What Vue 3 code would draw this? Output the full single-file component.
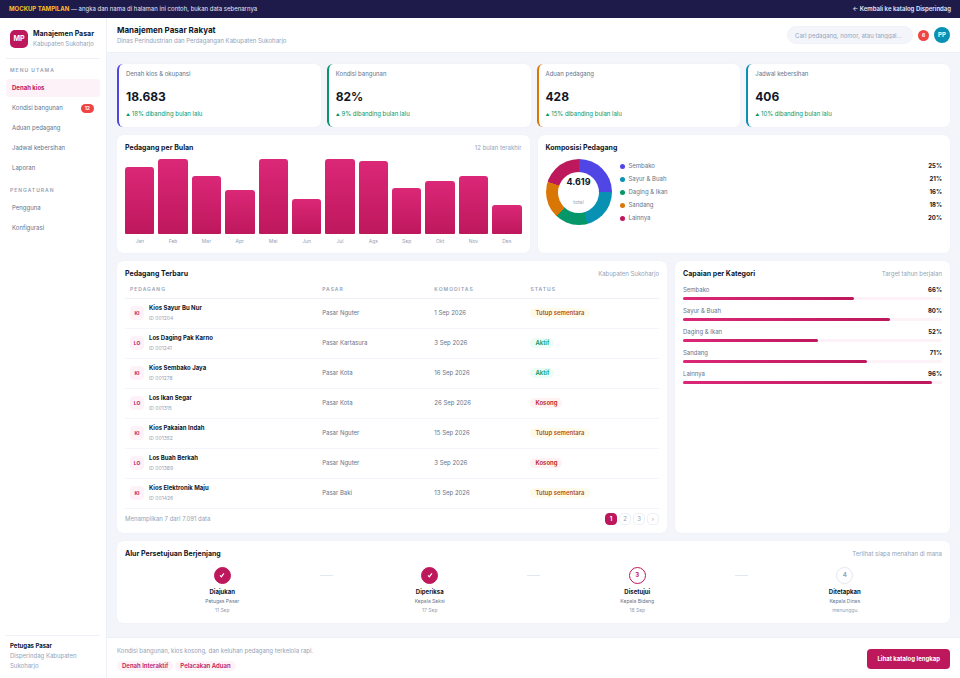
<template>
  <div class="page">
    <div class="banner">
      <p><strong>MOCKUP TAMPILAN</strong> — angka dan nama di halaman ini contoh, bukan data sebenarnya</p>
      <a href="#katalog">← Kembali ke katalog Disperindag</a>
    </div>

    <div class="layout">
      <aside class="sidebar">
        <div class="brand">
          <span class="logo">MP</span>
          <div>
            <div class="brand-name">Manajemen Pasar</div>
            <div class="brand-sub">Kabupaten Sukoharjo</div>
          </div>
        </div>

        <nav v-for="group in menu" :key="group.title" class="menu">
          <div class="menu-title">{{ group.title }}</div>
          <a
            v-for="item in group.items"
            :key="item.label"
            href="#"
            class="menu-item"
            :class="{ active: item.label === activeMenu }"
            @click.prevent="activeMenu = item.label"
          >
            {{ item.label }}
            <span v-if="item.count" class="menu-count">{{ item.count }}</span>
          </a>
        </nav>

        <div class="user">
          <div class="user-name">Petugas Pasar</div>
          <div class="user-org">Disperindag Kabupaten Sukoharjo</div>
        </div>
      </aside>

      <div class="main">
        <header class="topbar">
          <div>
            <h1>Manajemen Pasar Rakyat</h1>
            <p>Dinas Perindustrian dan Perdagangan Kabupaten Sukoharjo</p>
          </div>
          <div class="tools">
            <input v-model="search" type="text" aria-label="Cari" placeholder="Cari pedagang, nomor, atau tanggal..." />
            <span class="notif">6</span>
            <span class="avatar">PP</span>
          </div>
        </header>

        <main class="content">
          <section class="stats">
            <div v-for="s in stats" :key="s.label" class="stat" :class="s.color">
              <div class="stat-label">{{ s.label }}</div>
              <div class="stat-value">{{ s.value }}</div>
              <div class="stat-trend"><span class="arrow">▲</span> {{ s.trend }}% dibanding bulan lalu</div>
            </div>
          </section>

          <section class="row half">
            <div class="card">
              <div class="card-head">
                <h2>Pedagang per Bulan</h2>
                <span>12 bulan terakhir</span>
              </div>
              <div class="bars">
                <div v-for="m in months" :key="m.name" class="bar-col">
                  <div class="bar-track">
                    <div class="bar" :style="{ height: m.value + '%' }"></div>
                  </div>
                  <span>{{ m.name }}</span>
                </div>
              </div>
            </div>

            <div class="card">
              <div class="card-head">
                <h2>Komposisi Pedagang</h2>
              </div>
              <div class="composition">
                <div class="donut" :style="{ background: donutGradient }">
                  <div class="donut-hole">
                    <strong>4.619</strong>
                    <span>total</span>
                  </div>
                </div>
                <ul class="legend">
                  <li v-for="c in composition" :key="c.name">
                    <i :style="{ background: c.color }"></i>
                    {{ c.name }}
                    <b>{{ c.percent }}%</b>
                  </li>
                </ul>
              </div>
            </div>
          </section>

          <section class="row wide">
            <div class="card">
              <div class="card-head">
                <h2>Pedagang Terbaru</h2>
                <span>Kabupaten Sukoharjo</span>
              </div>
              <table>
                <thead>
                  <tr>
                    <th class="col-name">Pedagang</th>
                    <th class="col-market">Pasar</th>
                    <th class="col-date">Komoditas</th>
                    <th>Status</th>
                  </tr>
                </thead>
                <tbody>
                  <tr v-for="t in traders" :key="t.id">
                    <td>
                      <div class="trader">
                        <span class="initial">{{ t.name.slice(0, 2).toUpperCase() }}</span>
                        <div>
                          <div class="trader-name">{{ t.name }}</div>
                          <div class="trader-id">ID {{ t.id }}</div>
                        </div>
                      </div>
                    </td>
                    <td>{{ t.market }}</td>
                    <td>{{ t.date }}</td>
                    <td><span class="status" :class="statusClass[t.status]">{{ t.status }}</span></td>
                  </tr>
                </tbody>
              </table>
              <div class="table-foot">
                <span>Menampilkan 7 dari 7.091 data</span>
                <div class="pages">
                  <button
                    v-for="p in ['1', '2', '3']"
                    :key="p"
                    type="button"
                    :class="{ current: p === page }"
                    @click="page = p"
                  >{{ p }}</button>
                  <button type="button" aria-label="Berikutnya" @click="nextPage">›</button>
                </div>
              </div>
            </div>

            <div class="card">
              <div class="card-head">
                <h2>Capaian per Kategori</h2>
                <span>Target tahun berjalan</span>
              </div>
              <div v-for="t in targets" :key="t.name" class="target">
                <div class="target-head">
                  <span>{{ t.name }}</span>
                  <b>{{ t.percent }}%</b>
                </div>
                <div class="track">
                  <div class="fill" :style="{ width: t.percent + '%' }"></div>
                </div>
              </div>
            </div>
          </section>

          <section class="card">
            <div class="card-head">
              <h2>Alur Persetujuan Berjenjang</h2>
              <span>Terlihat siapa menahan di mana</span>
            </div>
            <div class="steps">
              <template v-for="(s, i) in steps" :key="s.title">
                <div v-if="i > 0" class="step-line"></div>
                <div class="step" :class="s.state">
                  <span class="step-dot">
                    <svg v-if="s.state === 'done'" viewBox="0 0 10 10" aria-hidden="true">
                      <path d="M1.8 5.6 L3.9 8 L8.2 2.4" />
                    </svg>
                    <template v-else>{{ i + 1 }}</template>
                  </span>
                  <div class="step-title">{{ s.title }}</div>
                  <div class="step-role">{{ s.role }}</div>
                  <div class="step-date">{{ s.date }}</div>
                </div>
              </template>
            </div>
          </section>
        </main>

        <footer class="footer">
          <div>
            <p>Kondisi bangunan, kios kosong, dan keluhan pedagang terkelola rapi.</p>
            <div class="tags">
              <span>Denah Interaktif</span>
              <span>Pelacakan Aduan</span>
            </div>
          </div>
          <a href="#katalog" class="cta">Lihat katalog lengkap</a>
        </footer>
      </div>
    </div>
  </div>
</template>

<script setup>
import { ref, computed } from 'vue'

const activeMenu = ref('Denah kios')
const search = ref('')
const page = ref('1')

const menu = [
  {
    title: 'Menu Utama',
    items: [
      { label: 'Denah kios' },
      { label: 'Kondisi bangunan', count: 12 },
      { label: 'Aduan pedagang' },
      { label: 'Jadwal kebersihan' },
      { label: 'Laporan' }
    ]
  },
  {
    title: 'Pengaturan',
    items: [{ label: 'Pengguna' }, { label: 'Konfigurasi' }]
  }
]

const stats = [
  { label: 'Denah kios & okupansi', value: '18.683', trend: 18, color: 'indigo' },
  { label: 'Kondisi bangunan', value: '82%', trend: 9, color: 'green' },
  { label: 'Aduan pedagang', value: '428', trend: 15, color: 'orange' },
  { label: 'Jadwal kebersihan', value: '406', trend: 10, color: 'cyan' }
]

const months = [
  { name: 'Jan', value: 89 },
  { name: 'Feb', value: 100 },
  { name: 'Mar', value: 77 },
  { name: 'Apr', value: 59 },
  { name: 'Mei', value: 100 },
  { name: 'Jun', value: 47 },
  { name: 'Jul', value: 100 },
  { name: 'Ags', value: 97 },
  { name: 'Sep', value: 61 },
  { name: 'Okt', value: 71 },
  { name: 'Nov', value: 78 },
  { name: 'Des', value: 39 }
]

const composition = [
  { name: 'Sembako', percent: 25, color: '#4f46e5' },
  { name: 'Sayur & Buah', percent: 21, color: '#0891b2' },
  { name: 'Daging & Ikan', percent: 16, color: '#059669' },
  { name: 'Sandang', percent: 18, color: '#d97706' },
  { name: 'Lainnya', percent: 20, color: '#be185d' }
]

const donutGradient = computed(() => {
  let start = 0
  const parts = composition.map((c) => {
    const end = start + c.percent
    const part = `${c.color} ${start}% ${end}%`
    start = end
    return part
  })
  return `conic-gradient(${parts.join(', ')})`
})

const traders = [
  { name: 'Kios Sayur Bu Nur', id: '001204', market: 'Pasar Nguter', date: '1 Sep 2026', status: 'Tutup sementara' },
  { name: 'Los Daging Pak Karno', id: '001241', market: 'Pasar Kartasura', date: '3 Sep 2026', status: 'Aktif' },
  { name: 'Kios Sembako Jaya', id: '001278', market: 'Pasar Kota', date: '16 Sep 2026', status: 'Aktif' },
  { name: 'Los Ikan Segar', id: '001315', market: 'Pasar Kota', date: '26 Sep 2026', status: 'Kosong' },
  { name: 'Kios Pakaian Indah', id: '001352', market: 'Pasar Nguter', date: '15 Sep 2026', status: 'Tutup sementara' },
  { name: 'Los Buah Berkah', id: '001389', market: 'Pasar Nguter', date: '3 Sep 2026', status: 'Kosong' },
  { name: 'Kios Elektronik Maju', id: '001426', market: 'Pasar Baki', date: '13 Sep 2026', status: 'Tutup sementara' }
]

const statusClass = {
  'Tutup sementara': 'warn',
  Aktif: 'ok',
  Kosong: 'bad'
}

const targets = [
  { name: 'Sembako', percent: 66 },
  { name: 'Sayur & Buah', percent: 80 },
  { name: 'Daging & Ikan', percent: 52 },
  { name: 'Sandang', percent: 71 },
  { name: 'Lainnya', percent: 96 }
]

const steps = [
  { title: 'Diajukan', role: 'Petugas Pasar', date: '11 Sep', state: 'done' },
  { title: 'Diperiksa', role: 'Kepala Seksi', date: '17 Sep', state: 'done' },
  { title: 'Disetujui', role: 'Kepala Bidang', date: '18 Sep', state: 'now' },
  { title: 'Ditetapkan', role: 'Kepala Dinas', date: 'menunggu', state: 'wait' }
]

function nextPage() {
  page.value = String(Math.min(3, Number(page.value) + 1))
}
</script>

<style>
body {
  margin: 0;
  background: #f4f5fb;
}
</style>

<style scoped>
* {
  box-sizing: border-box;
}

.page {
  display: flex;
  flex-direction: column;
  min-height: 100vh;
  font-family: Inter, "Liberation Sans", sans-serif;
  font-size: 6px;
  line-height: 10px;
  color: #0f172a;
}

h1,
h2,
p,
ul {
  margin: 0;
  padding: 0;
}

a {
  color: inherit;
  text-decoration: none;
}

.banner {
  display: flex;
  justify-content: space-between;
  align-items: center;
  height: 18px;
  padding: 0 9px;
  background: #1e1b4b;
  color: #e0e7ff;
}

.banner strong {
  color: #fbbf24;
}

.banner a {
  font-weight: 600;
}

.layout {
  flex: 1;
  display: flex;
}

.sidebar {
  display: flex;
  flex-direction: column;
  width: 107px;
  flex-shrink: 0;
  padding: 11px 6px 7px;
  background: #fff;
  border-right: 1px solid #eef0f7;
}

.brand {
  display: flex;
  align-items: center;
  gap: 5px;
  padding: 0 4px 9px;
  border-bottom: 1px solid #eef0f7;
  white-space: nowrap;
}

.logo {
  display: grid;
  place-items: center;
  width: 18px;
  height: 18px;
  border-radius: 5px;
  background: #be185d;
  color: #fff;
  font-size: 7px;
  font-weight: 700;
}

.brand-name {
  font-size: 7px;
  font-weight: 700;
}

.brand-sub {
  color: #94a3b8;
}

.menu {
  display: flex;
  flex-direction: column;
  gap: 2px;
  padding-top: 6px;
}

.menu + .menu {
  padding-top: 8px;
}

.menu-title {
  padding: 0 4px 2px;
  font-size: 5px;
  font-weight: 600;
  letter-spacing: 1px;
  text-transform: uppercase;
  color: #94a3b8;
}

.menu-item {
  display: flex;
  justify-content: space-between;
  align-items: center;
  height: 18px;
  padding: 0 6px;
  border-radius: 4px;
  color: #64748b;
}

.menu-item.active {
  background: #fdf2f8;
  color: #be185d;
  font-weight: 700;
}

.menu-count {
  padding: 0 4px;
  border-radius: 5px;
  background: #ef4444;
  color: #fff;
  font-size: 5px;
  line-height: 9px;
  font-weight: 700;
}

.user {
  margin-top: auto;
  padding: 5px 4px 0;
  border-top: 1px solid #eef0f7;
}

.user-name {
  font-weight: 700;
}

.user-org {
  color: #94a3b8;
}

.main {
  flex: 1;
  min-width: 0;
  display: flex;
  flex-direction: column;
}

.topbar {
  display: flex;
  justify-content: space-between;
  align-items: center;
  height: 35px;
  padding: 0 10px;
  background: #fff;
  border-bottom: 1px solid #eef0f7;
}

.topbar h1 {
  font-size: 8px;
  line-height: 12px;
  font-weight: 700;
}

.topbar p {
  color: #94a3b8;
}

.tools {
  display: flex;
  align-items: center;
  gap: 5px;
}

.tools input {
  width: 126px;
  height: 18px;
  padding: 0 4px 0 7px;
  border: 1px solid #f1f2f9;
  border-radius: 9px;
  background: #f4f5fb;
  font: inherit;
  color: #0f172a;
}

.tools input::placeholder {
  color: #94a3b8;
}

.notif,
.avatar {
  display: grid;
  place-items: center;
  width: 11px;
  height: 11px;
  border-radius: 50%;
  background: #ef4444;
  color: #fff;
  font-size: 5px;
  font-weight: 700;
}

.avatar {
  width: 16px;
  height: 16px;
  background: #0891b2;
  font-size: 6px;
}

.content {
  flex: 1;
  display: flex;
  flex-direction: column;
  gap: 8px;
  padding: 11px 10px 14px;
}

.stats {
  display: grid;
  grid-template-columns: repeat(4, 1fr);
  gap: 6px;
}

.stat {
  padding: 5px 8px 7px 7px;
  background: #fff;
  border-left: 2px solid;
  border-radius: 6px;
  box-shadow: 0 0 1px rgba(30, 27, 75, 0.08);
}

.stat.indigo {
  border-left-color: #4f46e5;
}

.stat.green {
  border-left-color: #059669;
}

.stat.orange {
  border-left-color: #d97706;
}

.stat.cyan {
  border-left-color: #0891b2;
}

.stat-label {
  color: #64748b;
}

.stat-value {
  margin: 10px 0 4px;
  font-size: 12px;
  line-height: 16px;
  font-weight: 700;
}

.stat-trend {
  color: #059669;
}

.arrow {
  font-size: 4px;
}

.row {
  display: grid;
  gap: 8px;
}

.row.half {
  grid-template-columns: 1fr 1fr;
}

.row.wide {
  grid-template-columns: 2fr 1fr;
}

.card {
  padding: 8px;
  background: #fff;
  border-radius: 6px;
  box-shadow: 0 0 1px rgba(30, 27, 75, 0.08);
}

.card-head {
  display: flex;
  justify-content: space-between;
  align-items: center;
  margin-bottom: 6px;
}

.card-head h2 {
  font-size: 7px;
  font-weight: 700;
}

.card-head span {
  color: #94a3b8;
}

.bars {
  display: flex;
  gap: 4px;
}

.bar-col {
  flex: 1;
  text-align: center;
  font-size: 5px;
  line-height: 8px;
  color: #94a3b8;
}

.bar-track {
  display: flex;
  align-items: flex-end;
  height: 75px;
  margin-bottom: 3px;
}

.bar {
  width: 100%;
  border-radius: 3px 3px 1px 1px;
  background: linear-gradient(#db2777, #be185d);
}

.composition {
  display: flex;
  align-items: center;
  gap: 8px;
}

.donut {
  display: grid;
  place-items: center;
  width: 66px;
  height: 66px;
  border-radius: 50%;
}

.donut-hole {
  display: flex;
  flex-direction: column;
  align-items: center;
  justify-content: center;
  gap: 10px;
  width: 41px;
  height: 41px;
  border-radius: 50%;
  background: #fff;
}

.donut-hole strong {
  font-size: 9px;
}

.donut-hole span {
  font-size: 5px;
  color: #94a3b8;
}

.legend {
  flex: 1;
  display: flex;
  flex-direction: column;
  gap: 3px;
  list-style: none;
}

.legend li {
  display: flex;
  align-items: center;
  gap: 4px;
  color: #64748b;
}

.legend i {
  width: 5px;
  height: 5px;
  border-radius: 50%;
}

.legend b {
  margin-left: auto;
  color: #0f172a;
}

table {
  width: 100%;
  border-collapse: collapse;
}

th,
td {
  padding: 0 5px;
  border-bottom: 1px solid #f4f5fb;
  text-align: left;
}

th {
  height: 13px;
  padding-bottom: 4px;
  font-size: 5px;
  line-height: 8px;
  font-weight: 600;
  letter-spacing: 1px;
  text-transform: uppercase;
  color: #94a3b8;
  border-bottom-color: #eef0f7;
}

td {
  height: 30px;
  color: #64748b;
}

.col-name {
  width: 36%;
}

.col-market {
  width: 21%;
}

.col-date {
  width: 18%;
}

.trader {
  display: flex;
  align-items: center;
  gap: 5px;
}

.initial {
  display: grid;
  place-items: center;
  width: 14px;
  height: 14px;
  border-radius: 4px;
  background: #fdf2f8;
  color: #be185d;
  font-size: 5px;
  font-weight: 700;
}

.trader-name {
  color: #0f172a;
  font-weight: 700;
}

.trader-id {
  font-size: 5px;
  color: #94a3b8;
}

.status {
  display: inline-block;
  padding: 0 5px;
  border-radius: 5px;
  font-weight: 600;
}

.status.warn {
  background: #fffbeb;
  color: #b45309;
}

.status.ok {
  background: #ecfdf5;
  color: #059669;
}

.status.bad {
  background: #fef2f2;
  color: #b91c1c;
}

.table-foot {
  display: flex;
  justify-content: space-between;
  align-items: center;
  padding-top: 4px;
  color: #94a3b8;
}

.pages {
  display: flex;
  gap: 2px;
}

.pages button {
  width: 12px;
  height: 12px;
  padding: 0;
  border: 1px solid #eef0f7;
  border-radius: 4px;
  background: #fff;
  font: inherit;
  color: #94a3b8;
  cursor: pointer;
}

.pages button.current {
  border-color: #be185d;
  background: #be185d;
  color: #fff;
  font-weight: 700;
}

.target {
  margin-bottom: 6px;
}

.target-head {
  display: flex;
  justify-content: space-between;
  margin-bottom: 2px;
  color: #64748b;
}

.target-head b {
  color: #0f172a;
}

.track {
  height: 3px;
  border-radius: 2px;
  background: #fdf2f8;
}

.fill {
  height: 100%;
  border-radius: 2px;
  background: linear-gradient(90deg, #db2777, #be185d);
}

.steps {
  display: flex;
  padding-top: 2px;
}

.step {
  flex: 1;
  display: flex;
  flex-direction: column;
  align-items: center;
}

.step-line {
  width: 13px;
  height: 1px;
  margin-top: 8px;
  background: #e2e8f0;
}

.step-dot {
  display: grid;
  place-items: center;
  width: 17px;
  height: 17px;
  margin-bottom: 3px;
  border: 1px solid #e2e8f0;
  border-radius: 50%;
  background: #fff;
  font-weight: 700;
  color: #94a3b8;
}

.done .step-dot {
  border-color: #be185d;
  background: #be185d;
}

.now .step-dot {
  border-color: #be185d;
  color: #be185d;
}

.step-dot svg {
  width: 6px;
  height: 6px;
  fill: none;
  stroke: #fff;
  stroke-width: 2;
}

.step-title {
  font-weight: 700;
}

.step-role,
.step-date {
  font-size: 5px;
  line-height: 9px;
  color: #64748b;
}

.step-date {
  color: #94a3b8;
}

.footer {
  display: flex;
  justify-content: space-between;
  align-items: center;
  padding: 8px 10px 7px;
  background: #fff;
  border-top: 1px solid #eef0f7;
}

.footer p {
  margin-bottom: 5px;
  color: #94a3b8;
}

.tags {
  display: flex;
  gap: 2px;
}

.tags span {
  padding: 0 5px;
  border-radius: 5px;
  background: #fdf2f8;
  color: #be185d;
  font-weight: 600;
}

.cta {
  padding: 5px 10px;
  border-radius: 4px;
  background: #be185d;
  color: #fff;
  font-weight: 700;
}
</style>
